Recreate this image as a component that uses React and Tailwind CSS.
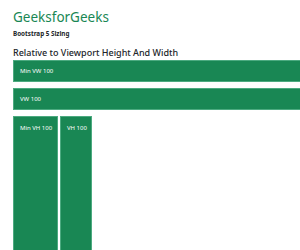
export default function App() {
  return (
    <div className="w-[300px] h-[250px] overflow-hidden bg-white" style={{ fontFamily: '"Noto Sans", "Open Sans", sans-serif' }}>
      <div className="pl-[13px] pt-[8px]">
        <h1 className="text-[13.5px] leading-[19px] text-[#198754] whitespace-nowrap">GeeksforGeeks</h1>
        <p className="text-[6.3px] font-bold leading-[8px] mt-[3px] text-[#212529] whitespace-nowrap">Bootstrap 5 Sizing</p>
        <h3 className="text-[9px] font-medium leading-[12px] mt-[9px] text-[#212529] whitespace-nowrap">Relative to Viewport Height And Width</h3>
        <div className="mt-[1px] w-[300px] h-[22px] bg-[#198754] border border-[#4caa80] flex items-center px-[6px] text-white text-[6px] whitespace-nowrap">Min VW 100</div>
        <div className="mt-[6px] w-[300px] h-[22px] bg-[#198754] border border-[#4caa80] flex items-center px-[6px] text-white text-[6px] whitespace-nowrap">VW 100</div>
        <div className="mt-[6px] flex gap-[2px]">
          <div className="w-[45px] h-[250px] bg-[#198754] border border-[#4caa80] px-[6px] pt-[7px] text-white text-[6px] leading-[8px] whitespace-nowrap">Min VH 100</div>
          <div className="w-[32px] h-[250px] bg-[#198754] border border-[#4caa80] px-[6px] pt-[7px] text-white text-[6px] leading-[8px] whitespace-nowrap">VH 100</div>
        </div>
      </div>
    </div>
  );
}
